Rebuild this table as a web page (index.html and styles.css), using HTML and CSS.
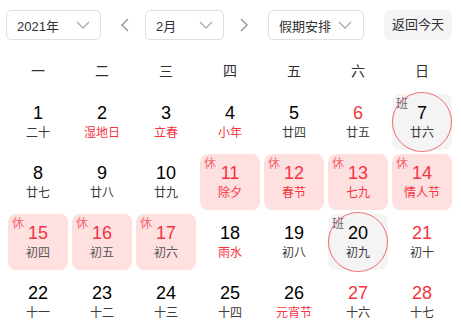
FILE: index.html
```html
<!DOCTYPE html>
<html lang="zh-CN">
<head>
<meta charset="utf-8">
<title>日历</title>
<link rel="stylesheet" href="styles.css">
</head>
<body>
<div class="toolbar">
  <div class="select select-year"><span class="select-text">2021年</span><svg class="chev" width="14" height="8" viewBox="0 0 14 8"><polyline points="1,1 7,7 13,1"/></svg></div>
  <div class="nav nav-prev"><svg width="8" height="14" viewBox="0 0 8 14"><polyline points="7,1 1,7 7,13"/></svg></div>
  <div class="select select-month"><span class="select-text">2月</span><svg class="chev" width="14" height="8" viewBox="0 0 14 8"><polyline points="1,1 7,7 13,1"/></svg></div>
  <div class="nav nav-next"><svg width="8" height="14" viewBox="0 0 8 14"><polyline points="1,1 7,7 1,13"/></svg></div>
  <div class="select select-holiday"><span class="select-text">假期安排</span><svg class="chev" width="14" height="8" viewBox="0 0 14 8"><polyline points="1,1 7,7 13,1"/></svg></div>
  <div class="today-btn">返回今天</div>
</div>

<div class="weekdays">
  <div>一</div><div>二</div><div>三</div><div>四</div><div>五</div><div>六</div><div>日</div>
</div>

<div class="days">
  <div class="day"><span class="num">1</span><span class="lunar">二十</span></div>
  <div class="day"><span class="num">2</span><span class="lunar fest">湿地日</span></div>
  <div class="day"><span class="num">3</span><span class="lunar fest">立春</span></div>
  <div class="day"><span class="num">4</span><span class="lunar fest">小年</span></div>
  <div class="day"><span class="num">5</span><span class="lunar">廿四</span></div>
  <div class="day"><span class="num red">6</span><span class="lunar">廿五</span></div>
  <div class="day work"><span class="tag">班</span><span class="ring"></span><span class="num">7</span><span class="lunar">廿六</span></div>

  <div class="day"><span class="num">8</span><span class="lunar">廿七</span></div>
  <div class="day"><span class="num">9</span><span class="lunar">廿八</span></div>
  <div class="day"><span class="num">10</span><span class="lunar">廿九</span></div>
  <div class="day rest"><span class="tag">休</span><span class="num red">11</span><span class="lunar fest">除夕</span></div>
  <div class="day rest"><span class="tag">休</span><span class="num red">12</span><span class="lunar fest">春节</span></div>
  <div class="day rest"><span class="tag">休</span><span class="num red">13</span><span class="lunar fest">七九</span></div>
  <div class="day rest"><span class="tag">休</span><span class="num red">14</span><span class="lunar fest">情人节</span></div>

  <div class="day rest"><span class="tag">休</span><span class="num red">15</span><span class="lunar">初四</span></div>
  <div class="day rest"><span class="tag">休</span><span class="num red">16</span><span class="lunar">初五</span></div>
  <div class="day rest"><span class="tag">休</span><span class="num red">17</span><span class="lunar">初六</span></div>
  <div class="day"><span class="num">18</span><span class="lunar fest">雨水</span></div>
  <div class="day"><span class="num">19</span><span class="lunar">初八</span></div>
  <div class="day work"><span class="tag">班</span><span class="ring"></span><span class="num">20</span><span class="lunar">初九</span></div>
  <div class="day"><span class="num red">21</span><span class="lunar">初十</span></div>

  <div class="day"><span class="num">22</span><span class="lunar">十一</span></div>
  <div class="day"><span class="num">23</span><span class="lunar">十二</span></div>
  <div class="day"><span class="num">24</span><span class="lunar">十三</span></div>
  <div class="day"><span class="num">25</span><span class="lunar">十四</span></div>
  <div class="day"><span class="num">26</span><span class="lunar fest">元宵节</span></div>
  <div class="day"><span class="num red">27</span><span class="lunar">十六</span></div>
  <div class="day"><span class="num red">28</span><span class="lunar">十七</span></div>
</div>
</body>
</html>
```

FILE: styles.css
```css
* { box-sizing: border-box; }

body {
  margin: 0;
  background: #ffffff;
  font-family: "Liberation Sans", "Noto Sans CJK SC", sans-serif;
  color: #303133;
}

.toolbar {
  display: flex;
  align-items: center;
  padding: 10px 0 0 6px;
  height: 40px;
}

.select {
  display: flex;
  align-items: center;
  justify-content: space-between;
  height: 30px;
  padding: 0 10px 0 10px;
  border: 1px solid #dcdfe6;
  border-radius: 5px;
  font-size: 13px;
  color: #303133;
}

.select-year { width: 95px; }
.select-month { width: 79px; }
.select-holiday { width: 96px; padding-right: 11px; }

.chev polyline {
  fill: none;
  stroke: #a8abb2;
  stroke-width: 1.3;
}

.nav {
  display: flex;
  align-items: center;
  justify-content: center;
  width: 16px;
  height: 30px;
}

.nav polyline {
  fill: none;
  stroke: #909399;
  stroke-width: 1.4;
}

.nav-prev { margin: 0 12px 0 16px; }
.nav-next { margin: 0 16px 0 12px; }

.today-btn {
  margin-left: 20px;
  width: 68px;
  height: 30px;
  line-height: 30px;
  text-align: center;
  background: #f4f4f5;
  border-radius: 6px;
  font-size: 13px;
  color: #303133;
}

.weekdays {
  display: grid;
  grid-template-columns: repeat(7, 60px);
  column-gap: 4px;
  margin: 13px 0 0 8px;
  height: 36px;
  line-height: 36px;
  font-size: 14px;
  color: #303133;
  text-align: center;
}

.days {
  display: grid;
  grid-template-columns: repeat(7, 60px);
  grid-auto-rows: 56px;
  gap: 4px;
  margin: 5px 0 0 8px;
}

.day {
  position: relative;
  display: flex;
  flex-direction: column;
  align-items: center;
  justify-content: center;
  border-radius: 8px;
}

.num {
  font-size: 18px;
  line-height: 20px;
  color: #000000;
}

.num.red { color: #f5333f; }

.lunar {
  margin-top: 2px;
  font-size: 12px;
  line-height: 16px;
  color: #3a3a3a;
}

.lunar.fest { color: #f5333f; }

.rest { background: #ffe0e1; }
.rest .lunar { color: #555555; }
.rest .lunar.fest { color: #f5333f; }

.work { background: #f4f4f5; }

.tag {
  position: absolute;
  top: 4px;
  left: 4px;
  font-size: 12px;
  line-height: 12px;
}

.rest .tag { color: #f2646e; }
.work .tag { color: #606266; }

.ring {
  position: absolute;
  top: -2px;
  left: 0;
  width: 60px;
  height: 60px;
  border: 1px solid #f26b6b;
  border-radius: 50%;
}
```
